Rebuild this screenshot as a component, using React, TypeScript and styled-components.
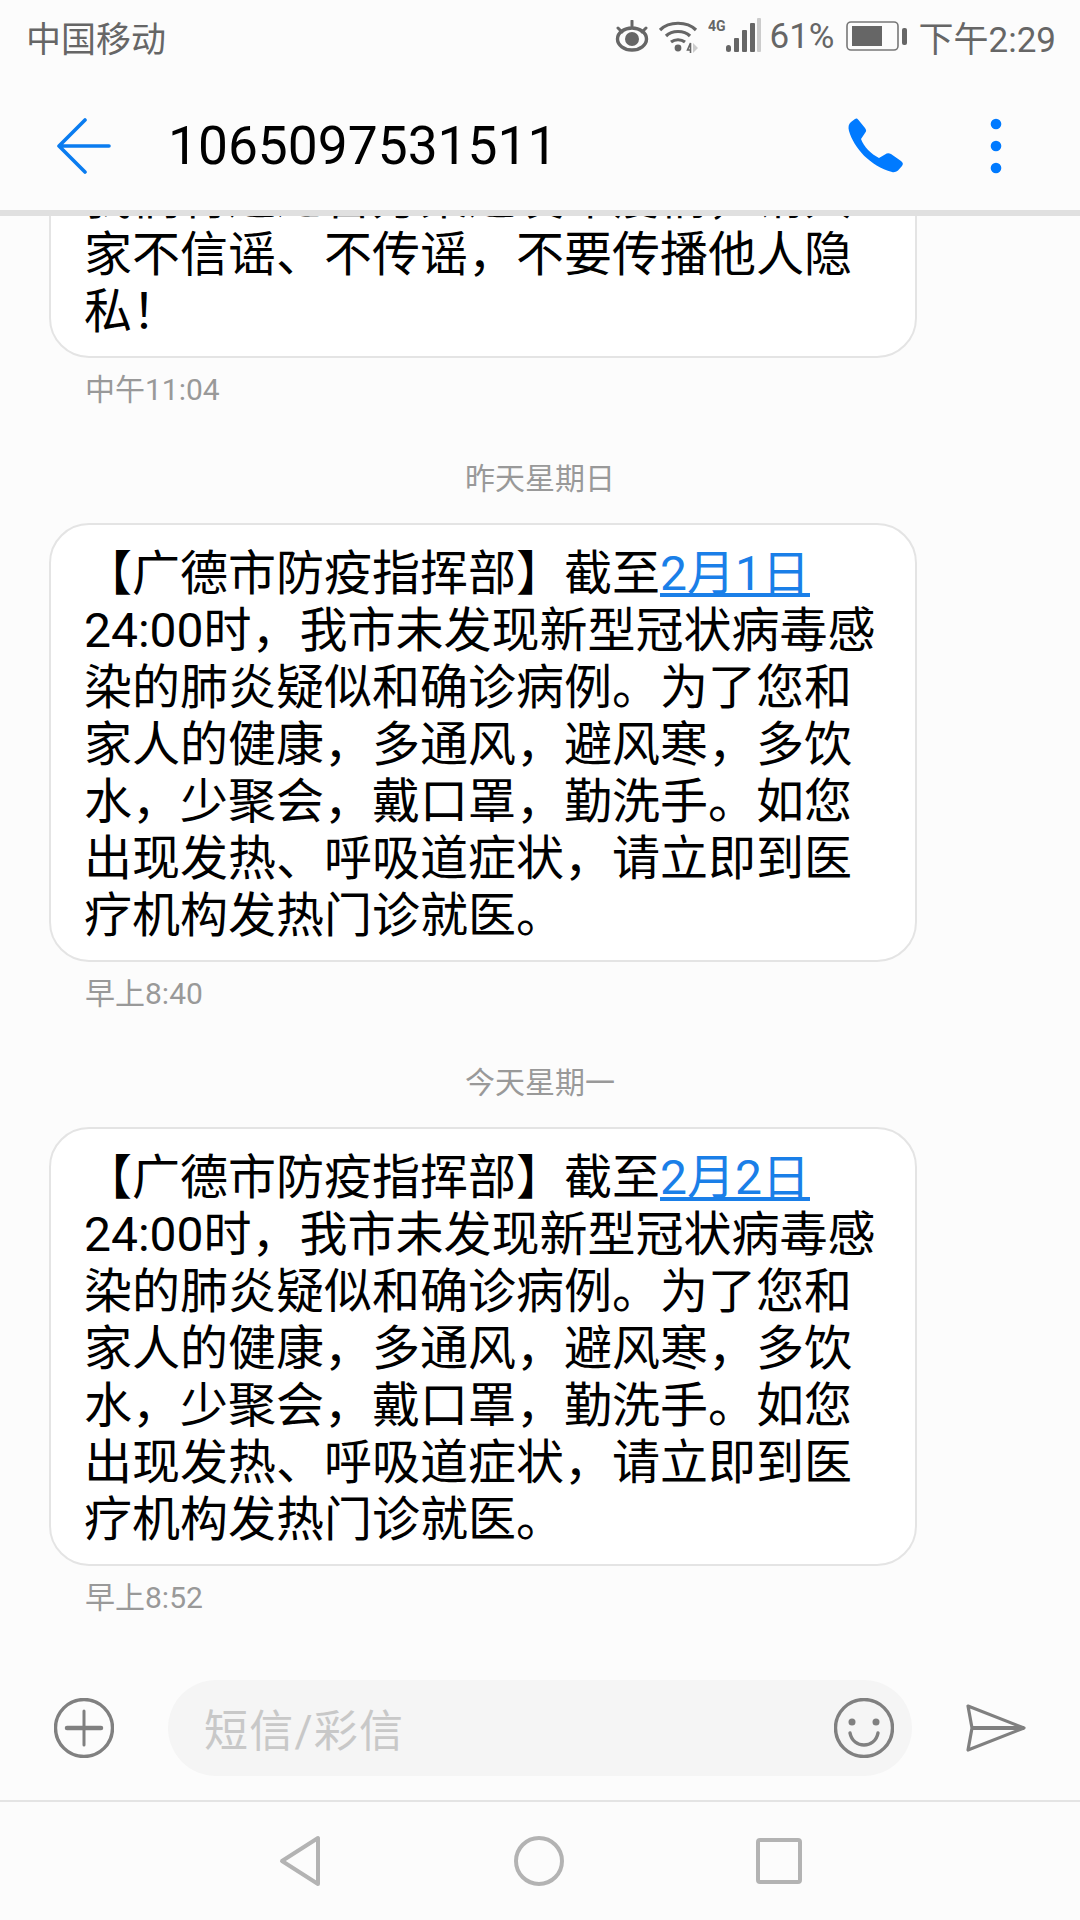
import React from "react";
import styled, { createGlobalStyle } from "styled-components";

const GlobalStyle = createGlobalStyle`
  html, body {
    margin: 0;
    padding: 0;
    background: #fcfcfc;
  }
  * {
    box-sizing: border-box;
  }
`;

const FONT = `Roboto, "Noto Sans CJK SC", sans-serif`;

const Page = styled.div`
  width: 1080px;
  height: 1920px;
  display: flex;
  flex-direction: column;
  overflow: hidden;
  background: #fcfcfc;
  font-family: ${FONT};
`;

const StatusBar = styled.div`
  height: 72px;
  padding: 0 24px 0 26px;
  display: flex;
  align-items: center;
  justify-content: space-between;
  color: #666;
  flex: none;
`;

const Carrier = styled.span`
  font-size: 35px;
`;

const StatusRight = styled.div`
  display: flex;
  align-items: center;
`;

const StatusText = styled.span<{ $size: number; $left: number }>`
  font-size: ${({ $size }) => $size}px;
  margin-left: ${({ $left }) => $left}px;
`;

const Header = styled.header`
  height: 144px;
  flex: none;
  display: flex;
  align-items: center;
  padding: 10px 0 0 57px;
  border-bottom: 6px solid #e0e0e0;
`;

const Title = styled.h1`
  margin: 0 0 0 57px;
  flex: 1;
  font-size: 53.3px;
  font-weight: 400;
  color: #000;
`;

const HeaderIcon = styled.svg<{ $right: number }>`
  margin-right: ${({ $right }) => $right}px;
`;

const Messages = styled.main`
  flex: 1;
  min-height: 0;
  overflow: hidden;
  display: flex;
  flex-direction: column;
  justify-content: flex-end;
  padding: 0 0 43px 49px;
`;

const Bubble = styled.div`
  width: 868px;
  flex: none;
  padding: 20px 0 16px 33px;
  border: 2px solid #e4e4e4;
  border-radius: 40px;
  background: #fff;
  color: #000;
  font-size: 48px;
  line-height: 57px;
`;

const Line = styled.div`
  white-space: nowrap;
`;

const DateLink = styled.span`
  color: #1a7fe8;
  text-decoration: underline;
`;

const Time = styled.div`
  margin: 13px 0 0 36px;
  font-size: 30px;
  line-height: 38px;
  color: #999;
`;

const DayLabel = styled.div`
  width: 982px;
  margin: 51px 0 25px;
  text-align: center;
  font-size: 30px;
  line-height: 38px;
  color: #999;
`;

const Composer = styled.div`
  height: 140px;
  flex: none;
  display: flex;
  align-items: center;
  padding: 0 54px 4px 54px;
`;

const InputPill = styled.div`
  width: 744px;
  height: 96px;
  margin: 0 54px;
  padding: 0 18px 0 36px;
  display: flex;
  align-items: center;
  justify-content: space-between;
  border-radius: 48px;
  background: #f5f5f5;
`;

const Placeholder = styled.span`
  font-size: 44px;
  letter-spacing: 1.2px;
  color: #c8c8c8;
`;

const NavBar = styled.nav`
  height: 120px;
  flex: none;
  display: flex;
  align-items: center;
  border-top: 2px solid #e4e4e4;
  padding-left: 279px;
  gap: 195px;
`;

const Eye = () => (
  <svg width="36" height="32" viewBox="0 0 36 32" fill="none" stroke="#666">
    <ellipse cx="18" cy="19" rx="14.500" ry="11" strokeWidth="3.4" />
    <circle cx="18" cy="19" r="7" fill="#666" stroke="none" />
    <path d="M4 8 8 12M18 1v5M32 8l-4 4" strokeWidth="3" strokeLinecap="round" />
  </svg>
);

const Wifi = () => (
  <svg width="40" height="34" viewBox="0 0 40 34" fill="none" stroke="#666" style={{ marginLeft: 9 }}>
    <path d="M1 11C10 2 28 2 37 11" strokeWidth="3.2" />
    <path d="M7 17C13 11 25 11 31 17" strokeWidth="3.2" />
    <path d="M12 23c4-3 10-3 14 0" strokeWidth="3.2" />
    <circle cx="19" cy="29" r="3.400" fill="#666" stroke="none" />
    <path d="M31 31h-2.500l3-7v10" strokeWidth="1.6" />
    <path d="M34 24l5 5-5 5z" fill="#ccc" stroke="none" />
  </svg>
);

const Signal = () => (
  <svg width="54" height="36" viewBox="0 0 54 36" style={{ marginLeft: 9 }}>
    <text x="0" y="13" fontFamily="Roboto" fontWeight="700" fontSize="14" fill="#666">4G</text>
    <rect x="18" y="27" width="5" height="7" rx="2.500" fill="#666" />
    <rect x="26" y="20" width="5" height="14" rx="1" fill="#666" />
    <rect x="34" y="12" width="5" height="22" rx="1" fill="#666" />
    <rect x="42" y="5" width="5" height="29" rx="1" fill="#666" />
    <rect x="49" y="0" width="4" height="34" rx="1" fill="#ccc" />
  </svg>
);

const Battery = () => (
  <svg width="61" height="30" viewBox="0 0 61 30" style={{ marginLeft: 11 }}>
    <rect x="1" y="1" width="51" height="28" rx="4" fill="none" stroke="#777" strokeWidth="1.6" />
    <rect x="6" y="5" width="30" height="20" fill="#666" />
    <rect x="56" y="7" width="5" height="17" rx="2" fill="#666" />
  </svg>
);

const BackArrow = () => (
  <svg width="54" height="56" viewBox="0 0 54 56" fill="none" stroke="#0a7cf0" strokeWidth="3.6" strokeLinecap="round" strokeLinejoin="round">
    <path d="M28 2 2 28l26 26M3 28h49" />
  </svg>
);

const PhoneIcon = () => (
  <HeaderIcon $right={86} width="56" height="56" viewBox="0 0 56 56">
    <path
      d="M3 4 7 1C8.500 0 9.500 0.500 10.500 2L17 10C18.500 12 18.500 13.500 17 15L13 21C16 29 23 36 31 40L37 36.500C39 35 41 35 43 36L53 43C55 44.500 55.500 46 54 48L50 52.500C48 54 46 54.500 44 54C22 48 6 30 1 13C0 9 0.500 6 3 4Z"
      fill="#007aff"
    />
  </HeaderIcon>
);

const MoreDots = () => (
  <HeaderIcon $right={78} width="12" height="56" viewBox="0 0 12 56" fill="#007aff">
    <circle cx="6" cy="6" r="5.300" />
    <circle cx="6" cy="28" r="5.300" />
    <circle cx="6" cy="50" r="5.300" />
  </HeaderIcon>
);

const PlusIcon = () => (
  <svg width="60" height="60" viewBox="0 0 60 60" fill="none" stroke="#808080" style={{ flex: "none" }}>
    <circle cx="30" cy="30" r="28.500" strokeWidth="3.4" />
    <path d="M30 13v34" strokeWidth="3" strokeLinecap="round" />
    <path d="M13 30h34" strokeWidth="4.500" strokeLinecap="round" />
  </svg>
);

const SmileIcon = () => (
  <svg width="60" height="60" viewBox="0 0 60 60" fill="none" stroke="#808080">
    <circle cx="30" cy="30" r="28.500" strokeWidth="3.4" />
    <circle cx="18" cy="24" r="3.500" fill="#808080" stroke="none" />
    <circle cx="42" cy="24" r="3.500" fill="#808080" stroke="none" />
    <path d="M16 35c3 16 25 16 28 0" strokeWidth="3.4" strokeLinecap="round" />
  </svg>
);

const SendIcon = () => (
  <svg width="60" height="48" viewBox="0 0 60 48" fill="none" stroke="#808080" strokeLinejoin="round" strokeWidth="3.2" style={{ flex: "none" }}>
    <path d="M2 2 58 24 2 46 6 24Z" />
    <path d="M6 24h52" strokeWidth="4" />
  </svg>
);

const NavBack = () => (
  <svg width="42" height="52" viewBox="0 0 42 52" fill="none" stroke="#b3b3b3" strokeWidth="4" strokeLinejoin="round">
    <path d="M39 3v46L3 26Z" />
  </svg>
);

const NavHome = () => (
  <svg width="50" height="50" viewBox="0 0 50 50" fill="none" stroke="#b3b3b3" strokeWidth="4" style={{ marginLeft: -2 }}>
    <circle cx="25" cy="25" r="23" />
  </svg>
);

const NavRecent = () => (
  <svg width="46" height="46" viewBox="0 0 46 46" fill="none" stroke="#b3b3b3" strokeWidth="4" strokeLinejoin="round" style={{ marginLeft: -3 }}>
    <rect x="2" y="2" width="42" height="42" rx="2" />
  </svg>
);

type Message = {
  day?: string;
  time: string;
  lines: React.ReactNode[];
};

const epidemicLines = (date: string): React.ReactNode[] => [
  <>
    【广德市防疫指挥部】截至<DateLink>{date}</DateLink>
  </>,
  "24:00时，我市未发现新型冠状病毒感",
  "染的肺炎疑似和确诊病例。为了您和",
  "家人的健康，多通风，避风寒，多饮",
  "水，少聚会，戴口罩，勤洗手。如您",
  "出现发热、呼吸道症状，请立即到医",
  "疗机构发热门诊就医。",
];

const messages: Message[] = [
  {
    time: "中午11:04",
    lines: ["我们将通过官方渠道发布疫情，请大", "家不信谣、不传谣，不要传播他人隐", "私！"],
  },
  { day: "昨天星期日", time: "早上8:40", lines: epidemicLines("2月1日") },
  { day: "今天星期一", time: "早上8:52", lines: epidemicLines("2月2日") },
];

export default function App() {
  return (
    <Page>
      <GlobalStyle />
      <StatusBar>
        <Carrier>中国移动</Carrier>
        <StatusRight>
          <Eye />
          <Wifi />
          <Signal />
          <StatusText $size={35} $left={8}>61%</StatusText>
          <Battery />
          <StatusText $size={35} $left={12}>下午2:29</StatusText>
        </StatusRight>
      </StatusBar>
      <Header>
        <BackArrow />
        <Title>1065097531511</Title>
        <PhoneIcon />
        <MoreDots />
      </Header>
      <Messages>
        {messages.map((message) => (
          <React.Fragment key={message.time}>
            {message.day && <DayLabel>{message.day}</DayLabel>}
            <Bubble>
              {message.lines.map((line, index) => (
                <Line key={index}>{line}</Line>
              ))}
            </Bubble>
            <Time>{message.time}</Time>
          </React.Fragment>
        ))}
      </Messages>
      <Composer>
        <PlusIcon />
        <InputPill>
          <Placeholder>短信/彩信</Placeholder>
          <SmileIcon />
        </InputPill>
        <SendIcon />
      </Composer>
      <NavBar>
        <NavBack />
        <NavHome />
        <NavRecent />
      </NavBar>
    </Page>
  );
}
